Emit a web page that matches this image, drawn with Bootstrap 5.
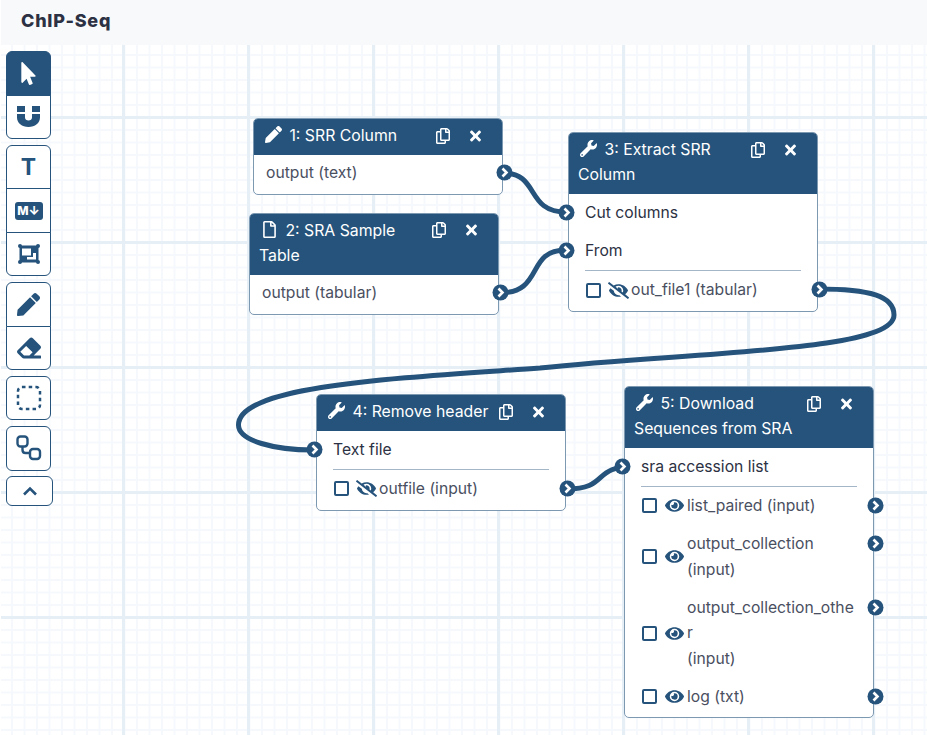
<!DOCTYPE html>
<html lang="en">
<head>
  <meta charset="UTF-8">
  <meta name="viewport" content="width=device-width, initial-scale=1.0">
  <title>ChIP-Seq</title>
  <link rel="stylesheet" href="https://cdn.jsdelivr.net/npm/bootstrap@5.3.3/dist/css/bootstrap.min.css">
  <style>
    html, body { height: 100%; overflow: hidden; }
    body { font-family: Inter, "Noto Sans", sans-serif; font-size: 15.7px; line-height: 25.4px; color: #2c3143; background: #fff; }
    .wf-title { height: 45px; margin-left: 1px; padding: 8px 20px; background: #f8f9fa; font-size: 18px; line-height: 25px; font-weight: 800; letter-spacing: .75px; }
    .wf-canvas {
      position: relative; height: 690px; margin-left: 1px;
      background-image:
        linear-gradient(to right, #e6eef6 3px, transparent 3px),
        linear-gradient(to bottom, #e6eef6 3px, transparent 3px),
        linear-gradient(to right, #f5f8fc 2px, transparent 2px),
        linear-gradient(to bottom, #f5f8fc 2px, transparent 2px);
      background-size: 125px 125px, 125px 125px, 12.5px 12.5px, 12.5px 12.5px;
      background-position: 121px 0, 0 71px, 10px 0, 0 9px;
    }
    .wf-edges { position: absolute; left: -1px; top: -45px; width: 927px; height: 735px; pointer-events: none; }
    .wf-edges path { fill: none; stroke: #25537b; stroke-width: 5; }

    /* toolbar */
    .wf-tools { position: absolute; left: 5px; top: 6px; width: 47px; }
    .wf-tools .btn-group-vertical { display: flex; width: 45px; margin-bottom: 5.8px; }
    .wf-tool { width: 45px; height: 44.5px; padding: 0; display: flex; align-items: center; justify-content: center; background: #fff; border: 1px solid #25537b; color: #25537b; border-radius: 6px; }
    .wf-tool.active, .wf-tool.active:hover { background: #25537b; color: #fff; border-color: #25537b; }
    .wf-tool svg { fill: currentColor; }
    .wf-tool-t { font-size: 23px; font-weight: 700; line-height: 1; }
    .wf-tool-md { background: #25537b; color: #fff; border-radius: 3px; width: 28px; height: 18px; font-size: 12px; line-height: 18px; font-weight: 800; text-align: center; }
    .wf-tool-up { width: 47px; height: 30px; }

    /* nodes */
    .wf-node { position: absolute; width: 250px; background: #fff; border: 1px solid #7d99b2; border-radius: 5px; }
    .wf-n1 { left: 252px; top: 73px; }
    .wf-n2 { left: 248px; top: 167.6px; }
    .wf-n3 { left: 567px; top: 87px; }
    .wf-n4 { left: 315px; top: 349.4px; }
    .wf-n5 { left: 623px; top: 341px; }
    .wf-head { background: #25537b; color: #fff; padding: 4px 10px 6.2px 9px; border-radius: 4px 4px 0 0; line-height: 25.4px; font-size: 15.8px; }
    .wf-head-btns { float: right; display: flex; margin: 0 1px 0 -8px; }
    .wf-head-btn { width: 32px; height: 25px; display: flex; align-items: center; justify-content: center; }
    .wf-head svg { fill: #fff; }
    .wf-head-ico { vertical-align: -2px; margin: 0 3px 0 2px; }
    .wf-head-ico-file { margin: 0 5px 0 4px; }
    .wf-body { padding: 5.8px 0 8px; }
    .wf-row { position: relative; padding: 0 16px; margin-bottom: 12.8px; }
    .wf-row:last-child { margin-bottom: 0; }
    .wf-row-data { padding-left: 12px; color: #4a4f5f; }
    .wf-row-out { display: flex; align-items: center; padding: 0 18px 0 17px; color: #4a4f5f; }
    .wf-check { appearance: none; width: 15px; height: 15px; flex: none; margin: 0; border: 2px solid #25537b; border-radius: 2px; background: #fff; }
    .wf-vis { flex: none; width: 30px; display: flex; justify-content: center; padding-left: 5px; }
    .wf-vis svg { fill: #25537b; }
    .wf-label { width: 168px; overflow-wrap: anywhere; }
    .wf-rule { margin: 7px 16px 6px; border-top: 1px solid #a3b6c7; }
    .wf-port { position: absolute; top: 4px; width: 17px; height: 17px; z-index: 2; }
    .wf-port-l { left: -11px; }
    .wf-port-r { right: -11px; }
  </style>
</head>
<body>
  <svg width="0" height="0" class="d-block position-absolute">
    <defs>
      <symbol id="i-pointer" viewBox="0 0 320 512"><path d="M302.189 329.126H196.105l55.831 135.993c3.889 9.428-.555 19.999-9.444 23.999l-49.165 21.427c-9.165 4-19.443-.571-23.332-9.714l-53.053-129.136-86.664 89.138C18.729 472.71 0 463.554 0 447.977V18.299C0 1.899 19.921-6.096 30.277 5.443l284.412 292.542c11.472 11.179 3.007 31.141-12.5 31.141z"/></symbol>
      <symbol id="i-magnet" viewBox="0 0 23 21"><path d="M0 0h8v6H0zM15 0h8v6h-8zM0 8h8v3.500c0 2 1.500 3 3.500 3s3.500-1 3.500-3V8h8v3.500C23 17 18 21 11.500 21S0 17 0 11.500z"/></symbol>
      <symbol id="i-group" viewBox="0 0 22 20"><rect x="1.500" y="1.500" width="19" height="17"/><circle cx="2" cy="2" r="2"/><circle cx="20" cy="2" r="2"/><circle cx="2" cy="18" r="2"/><circle cx="20" cy="18" r="2"/><path d="M4 4.500h9v7H4zM15 9h3v6.500H9V13h6z" fill="#fff"/></symbol>
      <symbol id="i-pen" viewBox="0 0 512 512"><path d="M290.74 93.24l128.02 128.02-277.99 277.99-114.14 12.6C11.35 513.54-1.56 500.62.14 485.34l12.7-114.22 277.9-277.88zm207.2-19.06l-60.11-60.11c-18.75-18.75-49.16-18.75-67.91 0l-56.55 56.55 128.02 128.02 56.55-56.55c18.75-18.76 18.75-49.16 0-67.91z"/></symbol>
      <symbol id="i-eraser" viewBox="0 0 512 512"><path d="M497.941 273.941c18.745-18.745 18.745-49.137 0-67.882l-160-160c-18.745-18.745-49.136-18.746-67.883 0l-256 256c-18.745 18.745-18.745 49.137 0 67.882l96 96A48.004 48.004 0 0 0 144 480h356c6.627 0 12-5.373 12-12v-40c0-6.627-5.373-12-12-12H355.883l142.058-142.059zm-302.627-62.627l137.373 137.373L265.373 416H150.628l-80-80 124.686-124.686z"/></symbol>
      <symbol id="i-select" viewBox="0 0 26 26"><rect x="2" y="2" width="22" height="22" rx="4" fill="none" stroke="currentColor" stroke-width="2.500" stroke-dasharray="3.500 3.200"/></symbol>
      <symbol id="i-link" viewBox="0 0 26 26"><rect x="1.500" y="1.500" width="10" height="10" rx="3" fill="none" stroke="currentColor" stroke-width="2.400"/><rect x="14" y="14" width="10" height="10" rx="3" fill="none" stroke="currentColor" stroke-width="2.400"/><path d="M6.500 12v3c0 2 1 3 3 3H14" fill="none" stroke="currentColor" stroke-width="2.400"/></symbol>
      <symbol id="i-up" viewBox="0 0 16 10"><path d="M2 8.500 8 2.500l6 6" fill="none" stroke="currentColor" stroke-width="2.600"/></symbol>
      <symbol id="i-pencil" viewBox="0 0 512 512"><path d="M497.900 142.100l-46.100 46.100c-4.700 4.700-12.300 4.700-17 0l-111-111c-4.700-4.700-4.700-12.300 0-17l46.100-46.100c18.700-18.700 49.100-18.700 67.900 0l60.100 60.100c18.800 18.700 18.800 49.100 0 67.900zM284.200 99.800L21.600 362.400.4 483.900c-2.900 16.400 11.400 30.600 27.800 27.800l121.500-21.300 262.600-262.600c4.700-4.700 4.700-12.300 0-17l-111-111c-4.800-4.700-12.400-4.700-17.100 0z"/></symbol>
      <symbol id="i-file" viewBox="0 0 384 512"><path d="M369.900 97.900L286 14C277 5 264.800-.1 252.100-.1H48C21.500 0 0 21.500 0 48v416c0 26.500 21.500 48 48 48h288c26.500 0 48-21.500 48-48V131.900c0-12.700-5.100-25-14.100-34zM332.100 128H256V51.900l76.100 76.100zM48 464V48h160v104c0 13.300 10.700 24 24 24h104v288H48z"/></symbol>
      <symbol id="i-wrench" viewBox="0 0 512 512"><path d="M507.730 109.100c-2.240-9.030-13.540-12.090-20.120-5.510l-74.360 74.360-67.880-11.310-11.310-67.880 74.360-74.360c6.620-6.620 3.430-17.900-5.660-20.160-47.380-11.740-99.550.91-136.580 37.930-39.640 39.640-50.550 97.100-34.050 147.200L18.740 402.760c-24.990 24.990-24.990 65.510 0 90.500 24.990 24.990 65.510 24.990 90.500 0l213.210-213.210c50.120 16.710 107.470 5.680 147.370-34.220 37.070-37.070 49.700-89.320 37.910-136.730zM64 472c-13.250 0-24-10.750-24-24 0-13.260 10.750-24 24-24s24 10.740 24 24c0 13.250-10.750 24-24 24z"/></symbol>
      <symbol id="i-copy" viewBox="0 0 448 512"><path d="M433.941 65.941l-51.882-51.882A48 48 0 0 0 348.118 0H176c-26.510 0-48 21.490-48 48v48H48c-26.510 0-48 21.490-48 48v320c0 26.510 21.490 48 48 48h224c26.510 0 48-21.490 48-48v-48h80c26.510 0 48-21.490 48-48V99.882a48 48 0 0 0-14.059-33.941zM266 464H54a6 6 0 0 1-6-6V150a6 6 0 0 1 6-6h74v224c0 26.510 21.490 48 48 48h96v42a6 6 0 0 1-6 6zm128-96H182a6 6 0 0 1-6-6V54a6 6 0 0 1 6-6h106v88c0 13.255 10.745 24 24 24h88v202a6 6 0 0 1-6 6zm6-256h-64V48h9.632c1.591 0 3.117.632 4.243 1.757l48.368 48.368a6 6 0 0 1 1.757 4.243V112z"/></symbol>
      <symbol id="i-times" viewBox="0 0 352 512"><path d="M242.720 256l100.070-100.070c12.280-12.280 12.280-32.190 0-44.480l-22.240-22.240c-12.280-12.280-32.190-12.280-44.480 0L176 189.280 75.930 89.210c-12.280-12.280-32.190-12.280-44.480 0L9.210 111.450c-12.280 12.280-12.280 32.190 0 44.480L109.280 256 9.210 356.070c-12.280 12.280-12.280 32.190 0 44.480l22.240 22.240c12.280 12.280 32.200 12.280 44.480 0L176 322.720l100.070 100.070c12.280 12.280 32.200 12.280 44.480 0l22.240-22.240c12.280-12.280 12.280-32.190 0-44.480L242.720 256z"/></symbol>
      <symbol id="i-eye" viewBox="0 0 576 512"><path d="M572.520 241.400C518.290 135.590 410.930 64 288 64S57.680 135.640 3.480 241.410a32.350 32.350 0 0 0 0 29.190C57.710 376.410 165.070 448 288 448s230.320-71.640 284.520-177.410a32.350 32.350 0 0 0 0-29.190zM288 400a144 144 0 1 1 144-144 143.930 143.930 0 0 1-144 144zm0-240a95.310 95.310 0 0 0-25.310 3.790 47.850 47.850 0 0 1-66.900 66.900A95.780 95.780 0 1 0 288 160z"/></symbol>
      <symbol id="i-eye-off" viewBox="0 0 640 512"><path d="M320 400c-75.850 0-137.250-58.710-142.900-133.110L72.200 185.820c-13.790 17.300-26.480 35.590-36.720 55.590a32.350 32.350 0 0 0 0 29.190C89.710 376.410 197.070 448 320 448c26.910 0 52.870-4 77.890-10.460L346 397.390a144.130 144.130 0 0 1-26 2.610zm313.820 58.100l-110.550-85.440a331.250 331.250 0 0 0 81.250-102.070 32.350 32.350 0 0 0 0-29.190C550.290 135.590 442.930 64 320 64a308.150 308.150 0 0 0-147.320 37.700L45.460 3.370A16 16 0 0 0 23 6.180L3.370 31.450A16 16 0 0 0 6.180 53.900l588.360 454.730a16 16 0 0 0 22.460-2.810l19.640-25.270a16 16 0 0 0-2.820-22.450zm-183.720-142l-39.300-30.380A94.750 94.750 0 0 0 416 256a94.760 94.760 0 0 0-121.310-92.210A47.650 47.650 0 0 1 304 192a46.640 46.640 0 0 1-1.540 10l-73.610-56.890A142.310 142.310 0 0 1 320 112a143.920 143.920 0 0 1 144 144c0 21.630-5.290 41.790-13.900 60.110z"/></symbol>
      <symbol id="i-port" viewBox="0 0 17 17"><circle cx="8.500" cy="8.500" r="8" fill="#25537b"/><path d="M6.500 4.500l4 4-4 4" fill="none" stroke="#fff" stroke-width="2.600"/></symbol>
    </defs>
  </svg>

  <div class="wf-title">ChIP-Seq</div>

  <div class="wf-canvas">
    <!-- Conexões entre os nós -->
    <svg class="wf-edges" viewBox="0 0 927 735">
      <path d="M503 173C540 173 525 212 566 212"/>
      <path d="M499 293C545 293 525 250 566 250"/>
      <path d="M818 289C870 289 894 296 894 315C894 352 690 352 540 368C400 378 238.500 385 238.500 425C238.500 441 275 450 313 450"/>
      <path d="M567 489C610 489 590 466 637 466"/>
    </svg>

    <!-- Barra de ferramentas -->
    <div class="wf-tools">
      <div class="btn-group-vertical">
        <button class="btn wf-tool active"><svg width="15" height="23"><use href="#i-pointer"/></svg></button>
        <button class="btn wf-tool"><svg width="23" height="21"><use href="#i-magnet"/></svg></button>
      </div>
      <div class="btn-group-vertical">
        <button class="btn wf-tool"><span class="wf-tool-t">T</span></button>
        <button class="btn wf-tool"><span class="wf-tool-md">M↓</span></button>
        <button class="btn wf-tool"><svg width="22" height="20"><use href="#i-group"/></svg></button>
      </div>
      <div class="btn-group-vertical">
        <button class="btn wf-tool"><svg width="23" height="23"><use href="#i-pen"/></svg></button>
        <button class="btn wf-tool"><svg width="24" height="24"><use href="#i-eraser"/></svg></button>
      </div>
      <div class="btn-group-vertical">
        <button class="btn wf-tool"><svg width="26" height="26"><use href="#i-select"/></svg></button>
      </div>
      <div class="btn-group-vertical">
        <button class="btn wf-tool"><svg width="26" height="26"><use href="#i-link"/></svg></button>
      </div>
      <button class="btn wf-tool wf-tool-up"><svg width="16" height="10"><use href="#i-up"/></svg></button>
    </div>

    <!-- Nó 1 -->
    <div class="card wf-node wf-n1">
      <div class="wf-head">
        <div class="wf-head-btns">
          <span class="wf-head-btn"><svg width="14" height="16"><use href="#i-copy"/></svg></span>
          <span class="wf-head-btn"><svg width="11" height="16"><use href="#i-times"/></svg></span>
        </div>
        <svg class="wf-head-ico" width="17" height="17"><use href="#i-pencil"/></svg> 1: SRR Column
      </div>
      <div class="wf-body">
        <div class="wf-row wf-row-data">output (text)
          <svg class="wf-port wf-port-r"><use href="#i-port"/></svg></div>
      </div>
    </div>

    <!-- Nó 2 -->
    <div class="card wf-node wf-n2">
      <div class="wf-head">
        <div class="wf-head-btns">
          <span class="wf-head-btn"><svg width="14" height="16"><use href="#i-copy"/></svg></span>
          <span class="wf-head-btn"><svg width="11" height="16"><use href="#i-times"/></svg></span>
        </div>
        <svg class="wf-head-ico wf-head-ico-file" width="13" height="17"><use href="#i-file"/></svg> 2: SRA Sample Table
      </div>
      <div class="wf-body">
        <div class="wf-row wf-row-data">output (tabular)
          <svg class="wf-port wf-port-r"><use href="#i-port"/></svg></div>
      </div>
    </div>

    <!-- Nó 3 -->
    <div class="card wf-node wf-n3">
      <div class="wf-head">
        <div class="wf-head-btns">
          <span class="wf-head-btn"><svg width="14" height="16"><use href="#i-copy"/></svg></span>
          <span class="wf-head-btn"><svg width="11" height="16"><use href="#i-times"/></svg></span>
        </div>
        <svg class="wf-head-ico" width="17" height="17"><use href="#i-wrench"/></svg> 3: Extract SRR Column
      </div>
      <div class="wf-body">
        <div class="wf-row"><svg class="wf-port wf-port-l"><use href="#i-port"/></svg>Cut columns</div>
        <div class="wf-row mb-0"><svg class="wf-port wf-port-l"><use href="#i-port"/></svg>From</div>
        <div class="wf-rule"></div>
        <div class="wf-row wf-row-out">
          <input class="wf-check" type="checkbox">
          <span class="wf-vis"><svg width="21" height="17"><use href="#i-eye-off"/></svg></span>
          <span class="wf-label">out_file1 (tabular)</span>
          <svg class="wf-port wf-port-r"><use href="#i-port"/></svg>
        </div>
      </div>
    </div>

    <!-- Nó 4 -->
    <div class="card wf-node wf-n4">
      <div class="wf-head">
        <div class="wf-head-btns">
          <span class="wf-head-btn"><svg width="14" height="16"><use href="#i-copy"/></svg></span>
          <span class="wf-head-btn"><svg width="11" height="16"><use href="#i-times"/></svg></span>
        </div>
        <svg class="wf-head-ico" width="17" height="17"><use href="#i-wrench"/></svg> 4: Remove header
      </div>
      <div class="wf-body">
        <div class="wf-row mb-0"><svg class="wf-port wf-port-l"><use href="#i-port"/></svg>Text file</div>
        <div class="wf-rule"></div>
        <div class="wf-row wf-row-out">
          <input class="wf-check" type="checkbox">
          <span class="wf-vis"><svg width="21" height="17"><use href="#i-eye-off"/></svg></span>
          <span class="wf-label">outfile (input)</span>
          <svg class="wf-port wf-port-r"><use href="#i-port"/></svg>
        </div>
      </div>
    </div>

    <!-- Nó 5 -->
    <div class="card wf-node wf-n5">
      <div class="wf-head">
        <div class="wf-head-btns">
          <span class="wf-head-btn"><svg width="14" height="16"><use href="#i-copy"/></svg></span>
          <span class="wf-head-btn"><svg width="11" height="16"><use href="#i-times"/></svg></span>
        </div>
        <svg class="wf-head-ico" width="17" height="17"><use href="#i-wrench"/></svg> 5: Download Sequences from SRA
      </div>
      <div class="wf-body">
        <div class="wf-row mb-0"><svg class="wf-port wf-port-l"><use href="#i-port"/></svg>sra accession list</div>
        <div class="wf-rule"></div>
        <div class="wf-row wf-row-out">
          <input class="wf-check" type="checkbox">
          <span class="wf-vis"><svg width="19" height="17"><use href="#i-eye"/></svg></span>
          <span class="wf-label">list_paired (input)</span>
          <svg class="wf-port wf-port-r"><use href="#i-port"/></svg>
        </div>
        <div class="wf-row wf-row-out">
          <input class="wf-check" type="checkbox">
          <span class="wf-vis"><svg width="19" height="17"><use href="#i-eye"/></svg></span>
          <span class="wf-label">output_collection (input)</span>
          <svg class="wf-port wf-port-r"><use href="#i-port"/></svg>
        </div>
        <div class="wf-row wf-row-out">
          <input class="wf-check" type="checkbox">
          <span class="wf-vis"><svg width="19" height="17"><use href="#i-eye"/></svg></span>
          <span class="wf-label">output_collection_other<br>(input)</span>
          <svg class="wf-port wf-port-r"><use href="#i-port"/></svg>
        </div>
        <div class="wf-row wf-row-out">
          <input class="wf-check" type="checkbox">
          <span class="wf-vis"><svg width="19" height="17"><use href="#i-eye"/></svg></span>
          <span class="wf-label">log (txt)</span>
          <svg class="wf-port wf-port-r"><use href="#i-port"/></svg>
        </div>
      </div>
    </div>
  </div>

  <script src="https://cdn.jsdelivr.net/npm/bootstrap@5.3.3/dist/js/bootstrap.bundle.min.js"></script>
</body>
</html>
